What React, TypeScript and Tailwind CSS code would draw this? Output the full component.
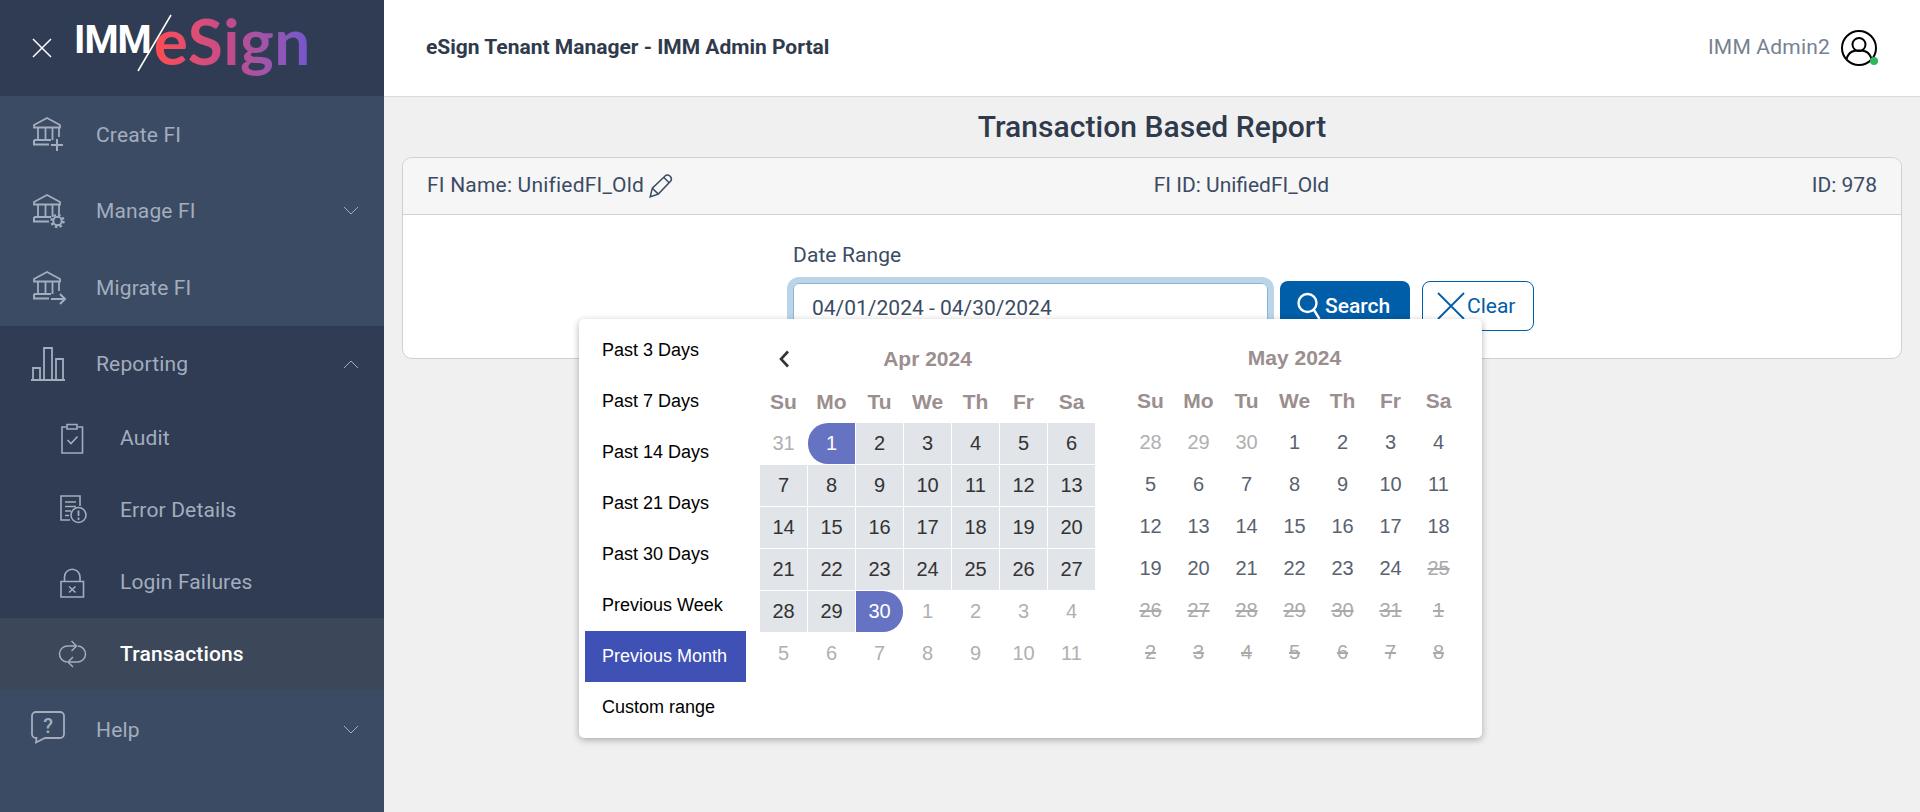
import React from "react";

const ic = "fill-none stroke-[#a3adbd]";

function Svg({ children, w = 40, h = 40 }: { children: React.ReactNode; w?: number; h?: number }) {
  return (
    <svg width={w} height={h} viewBox={`0 0 ${w} ${h}`} className={ic} strokeWidth={1.8}>
      {children}
    </svg>
  );
}

function Bank() {
  return (
    <>
      <path d="M6 11 L19 4 L32 11 V13.5 H6 Z" />
      <path d="M10 13.5 V26 M17.5 13.5 V26 M24.5 13.5 V26 M31 13.5 V23" />
      <path d="M6 26 H23 M6 26 V30.5 H21 " strokeWidth={2} />
    </>
  );
}

const icons: Record<string, React.ReactNode> = {
  create: (
    <Svg>
      <Bank />
      <path d="M23 31 H35 M29 25 V37" strokeWidth={2} />
    </Svg>
  ),
  manage: (
    <Svg>
      <Bank />
      <circle cx="29.5" cy="30" r="4.2" strokeWidth={2} />
      <circle cx="29.5" cy="30" r="6" strokeWidth={2.4} strokeDasharray="2.4 2.3" />
    </Svg>
  ),
  migrate: (
    <Svg>
      <Bank />
      <path d="M23 31 H37 M32 26 L37 31 L32 36" strokeWidth={2} />
    </Svg>
  ),
  reporting: (
    <Svg>
      <path d="M3 36 H37" strokeWidth={2} />
      <path d="M5 36 V24 H12 V36 M16 36 V4 H24 V36 M28 36 V15 H35 V36" />
    </Svg>
  ),
  audit: (
    <Svg w={32} h={32}>
      <path d="M10 5 H6 V31 H26.5 V5 H22" strokeWidth={1.6} />
      <path d="M11 2.5 H21 V7 H11 Z" strokeWidth={1.6} />
      <path d="M11.5 18 L15 21.5 L21.5 14.5" strokeWidth={1.6} />
    </Svg>
  ),
  error: (
    <Svg w={32} h={32}>
      <path d="M24 12 V2 H5 V26 H14" strokeWidth={1.6} />
      <path d="M9 8 H20 M9 12.5 H20 M9 17 H15 M9 21.5 H13" strokeWidth={1.6} />
      <circle cx="22.5" cy="21" r="7.5" strokeWidth={1.6} />
      <path d="M22.5 16.5 V22 M22.5 23.5 V26" strokeWidth={1.8} />
    </Svg>
  ),
  login: (
    <Svg w={32} h={32}>
      <path d="M5 15.5 H27.5 V31 H5 Z" strokeWidth={1.6} />
      <path d="M8.5 15.5 V11 A7.75 7.75 0 0 1 24 11 V15.5" strokeWidth={1.6} />
      <path d="M13 20.5 L19.5 26.5 M19.5 20.5 L13 26.5" strokeWidth={1.6} />
    </Svg>
  ),
  trans: (
    <Svg w={32} h={32}>
      <path d="M11 24 A8 8 0 0 1 12 8 H20" strokeWidth={1.5} />
      <path d="M15.5 3 L20.5 8 L15.5 13" strokeWidth={1.5} />
      <path d="M22 8 A8 8 0 0 1 21 24 H12" strokeWidth={1.5} />
      <path d="M17 19 L12 24 L17 29" strokeWidth={1.5} />
    </Svg>
  ),
  help: (
    <Svg>
      <path d="M8 3 H32 A4 4 0 0 1 36 7 V25 A4 4 0 0 1 32 29 H17 L8 33.5 L8.5 29 H8 A4 4 0 0 1 4 25 V7 A4 4 0 0 1 8 3 Z" />
    </Svg>
  ),
};

function Chevron({ up }: { up?: boolean }) {
  return (
    <svg width="16" height="9" viewBox="0 0 16 9" className="fill-none stroke-[#a3adbd]" strokeWidth={1}>
      <path d={up ? "M1 8 L8 1 L15 8" : "M1 1 L8 8 L15 1"} />
    </svg>
  );
}

function TopItem({
  icon,
  label,
  h,
  chevron,
  up,
  textPad = "pt-[3px]",
}: {
  icon: string;
  label: string;
  h: string;
  chevron?: boolean;
  up?: boolean;
  textPad?: string;
}) {
  return (
    <div className={`flex items-center pl-[28px] pr-[25px] ${h}`}>
      <div className="relative h-10 w-10 shrink-0">
        {icons[icon]}
        {icon === "help" && (
          <span className="absolute left-0 top-[2px] w-10 text-center text-[20px] font-medium leading-[30px] text-[#a3adbd]">
            ?
          </span>
        )}
      </div>
      <span className={`ml-[28px] flex-1 text-[21px] tracking-[0.15px] text-[#a3adbd] ${textPad}`}>{label}</span>
      {chevron && <Chevron up={up} />}
    </div>
  );
}

function SubItem({ icon, label, active }: { icon: string; label: string; active?: boolean }) {
  return (
    <div className={`flex h-[72px] items-center pl-[56px] ${active ? "bg-[#3c4859]" : ""}`}>
      <div className="h-8 w-8 shrink-0">{icons[icon]}</div>
      <span
        className={`ml-[32px] pt-[1px] text-[21px] tracking-[0.15px] ${active ? "font-medium text-white" : "text-[#a3adbd]"}`}
      >
        {label}
      </span>
    </div>
  );
}

function Logo() {
  return (
    <div className="relative ml-[22px] flex h-full items-start">
      <span className="mt-[16px] text-[39px] font-bold leading-[48px] tracking-[-1px] text-white">IMM</span>
      <span className="ml-[3px] mt-[6px] bg-gradient-to-r from-[#ff4a50] via-[#c04c8c] to-[#7055d0] bg-clip-text pb-[10px] font-['Lato',sans-serif] text-[64px] font-bold leading-[70px] tracking-[0.5px] text-transparent">
        eSign
      </span>
      <svg width="40" height="60" viewBox="0 0 40 60" className="absolute left-[62px] top-[14px] stroke-white" strokeWidth={1.5}>
        <path d="M35 1 L2 57" />
      </svg>
    </div>
  );
}

function Sidebar() {
  return (
    <aside className="flex w-[384px] shrink-0 flex-col bg-[#3c4b64]">
      <div className="flex h-[96px] items-center bg-[#303c54] pl-[32px]">
        <svg width="20" height="20" viewBox="0 0 20 20" className="shrink-0 stroke-white" strokeWidth={1.5}>
          <path d="M1 1 L19 19 M19 1 L1 19" />
        </svg>
        <Logo />
      </div>
      <TopItem icon="create" label="Create FI" h="h-[76px]" />
      <TopItem icon="manage" label="Manage FI" h="h-[77px]" chevron />
      <TopItem icon="migrate" label="Migrate FI" h="h-[77px]" />
      <div className="bg-[#303c54]">
        <TopItem icon="reporting" label="Reporting" h="h-[76px]" chevron up textPad="pt-[1px]" />
        <SubItem icon="audit" label="Audit" />
        <SubItem icon="error" label="Error Details" />
        <SubItem icon="login" label="Login Failures" />
        <SubItem icon="trans" label="Transactions" active />
      </div>
      <TopItem icon="help" label="Help" h="h-[78px]" chevron />
    </aside>
  );
}

type Cell = { t: number | string; k: "off" | "in" | "start" | "end" | "on" | "dis" };

function build(list: [number, number, Cell["k"]][]): Cell[] {
  const out: Cell[] = [];
  for (const [a, b, k] of list) for (let i = a; i <= b; i++) out.push({ t: i, k });
  return out;
}

const april = build([
  [31, 31, "off"],
  [1, 1, "start"],
  [2, 29, "in"],
  [30, 30, "end"],
  [1, 11, "off"],
]);

const may = build([
  [28, 30, "off"],
  [1, 24, "on"],
  [25, 31, "dis"],
  [1, 8, "dis"],
]);

const cellClass: Record<Cell["k"], string> = {
  off: "text-[#b0b0b0]",
  in: "bg-[#e1e4e8] text-[#333333]",
  start: "bg-[#6673c2] text-white rounded-l-[20px]",
  end: "bg-[#6673c2] text-white rounded-r-[20px]",
  on: "text-[#5a6270]",
  dis: "text-[#aaaaaa] line-through",
};

function Month({ title, cells, prev, up }: { title: string; cells: Cell[]; prev?: boolean; up?: boolean }) {
  const days = ["Su", "Mo", "Tu", "We", "Th", "Fr", "Sa"];
  return (
    <div className={up ? "-mt-px w-[335px]" : "w-[335px]"}>
      <div className="relative h-[42px] text-center text-[21px] font-bold leading-[42px] text-[#9b8e8e]">
        {prev && (
          <svg width="12" height="18" viewBox="0 0 12 18" className="absolute left-[18px] top-[12px] fill-none stroke-[#333333]" strokeWidth={2.6}>
            <path d="M10 1.5 L3 9 L10 16.5" />
          </svg>
        )}
        {title}
      </div>
      <div className="grid h-[43px] grid-cols-[repeat(7,47px)] gap-x-px text-center text-[21px] font-bold leading-[43px] text-[#9b8e8e]">
        {days.map((d) => (
          <div key={d}>{d}</div>
        ))}
      </div>
      <div className="grid grid-cols-[repeat(7,47px)] gap-px text-center text-[20px]">
        {cells.map((c, i) => (
          <div key={i} className={`h-[41px] leading-[41px] ${cellClass[c.k]}`}>
            {c.t}
          </div>
        ))}
      </div>
    </div>
  );
}

function Picker() {
  const ranges = [
    "Past 3 Days",
    "Past 7 Days",
    "Past 14 Days",
    "Past 21 Days",
    "Past 30 Days",
    "Previous Week",
    "Previous Month",
    "Custom range",
  ];
  return (
    <div className="absolute left-[-214px] top-[36px] z-10 flex h-[419px] w-[903px] rounded-[5px] bg-white pl-[6px] pt-[6px] font-['Liberation_Sans',Arial,sans-serif] shadow-[0_2px_7px_rgba(0,0,0,0.3)]">
      <div className="w-[161px] shrink-0 text-[18px] text-black">
        {ranges.map((r) => (
          <div
            key={r}
            className={`flex h-[51px] items-center pl-[17px] ${r === "Previous Month" ? "bg-[#3f51b5] text-white" : ""}`}
          >
            {r}
          </div>
        ))}
      </div>
      <div className="ml-[14px] mt-[13px] flex gap-[32px]">
        <Month title="Apr 2024" cells={april} prev />
        <Month title="May 2024" cells={may} up />
      </div>
    </div>
  );
}

function Main() {
  return (
    <main className="flex min-w-0 flex-1 flex-col">
      <header className="flex h-[97px] items-center justify-between border-b border-[#d8dbe0] bg-white pl-[42px] pr-[43px]">
        <h1 className="text-[21px] font-bold text-[#2f3a4c]">eSign Tenant Manager - IMM Admin Portal</h1>
        <div className="flex items-center gap-[11px]">
          <span className="text-[21px] tracking-[0.2px] text-[#768192]">IMM Admin2</span>
          <div className="relative h-9 w-9">
            <svg width="36" height="36" viewBox="0 0 36 36" className="fill-none stroke-black" strokeWidth={2}>
              <circle cx="18" cy="18" r="17" />
              <circle cx="18" cy="14.5" r="6.5" />
              <path d="M5.5 29 C8 21 13 20.5 18 20.5 C23 20.5 28 21 30.5 29" />
            </svg>
            <span className="absolute bottom-[1px] right-[-1px] h-2 w-2 rounded-full bg-[#2eb85c]" />
          </div>
        </div>
      </header>
      <div className="flex-1 bg-[#f0f0f0] px-[18px]">
        <h2 className="h-[60px] text-center text-[30px] font-medium leading-[60px] tracking-[0.05px] text-[#2f3a4c]">
          Transaction Based Report
        </h2>
        <section className="h-[202px] rounded-[10px] border border-[#d0d0d0] bg-white">
          <div className="flex h-[57px] items-center justify-between rounded-t-[10px] border-b border-[#d0d0d0] bg-[#f6f6f6] px-[24px] text-[21px] text-[#3c4b64]">
            <div className="flex items-center gap-[4px]">
              <span className="tracking-[0.2px]">FI Name: UnifiedFI_Old</span>
              <svg width="26" height="26" viewBox="0 0 24 24" className="fill-none stroke-[#3c4b64]" strokeWidth={1.4}>
                <path d="M2 22 L4 14 L16 2.5 Q18 1 20.5 3 Q22.5 5.5 21 7.5 L9.5 19.5 Z M4 14 L9.5 19.5 M14.5 4 L19.5 9" />
              </svg>
            </div>
            <span className="mr-[3px]">FI ID: UnifiedFI_Old</span>
            <span>ID: 978</span>
          </div>
          <div className="pl-[390px] pt-[26px]">
            <div className="text-[21px] leading-[28px] tracking-[0.1px] text-[#3c4b64]">Date Range</div>
            <div className="mt-[14px] flex items-start">
              <div className="relative">
                <div className="h-[50px] w-[475px] rounded-[6px] border border-[#86b7d8] pl-[18px] text-[21px] leading-[48px] text-[#3c4b64] shadow-[0_0_0_6px_#bcd4e8]">
                  04/01/2024 - 04/30/2024
                </div>
                <Picker />
              </div>
              <button className="ml-[12px] mt-[-2px] flex h-[50px] w-[130px] items-center rounded-[8px] bg-[#005da8] pl-[17px] text-[21px] font-medium text-white">
                <svg width="24" height="28" viewBox="0 0 24 28" className="fill-none stroke-white" strokeWidth={2.4}>
                  <circle cx="10.5" cy="11" r="9" />
                  <path d="M17 18 L22.5 27" />
                </svg>
                <span className="ml-[4px] pt-[2px]">Search</span>
              </button>
              <button className="ml-[12px] mt-[-2px] flex h-[50px] w-[112px] items-center rounded-[8px] border border-[#005da8] bg-white pl-[13px] text-[21px] text-[#005da8]">
                <svg width="30" height="28" viewBox="0 0 30 28" className="fill-none stroke-[#005da8]" strokeWidth={1.8}>
                  <path d="M2 1 L28 27 M28 1 L2 27" />
                </svg>
                <span className="ml-[1px] pt-[2px]">Clear</span>
              </button>
            </div>
          </div>
        </section>
      </div>
    </main>
  );
}

export default function App() {
  return (
    <div className="flex h-[812px] w-[1920px] overflow-hidden font-['Roboto',sans-serif]">
      <Sidebar />
      <Main />
    </div>
  );
}
